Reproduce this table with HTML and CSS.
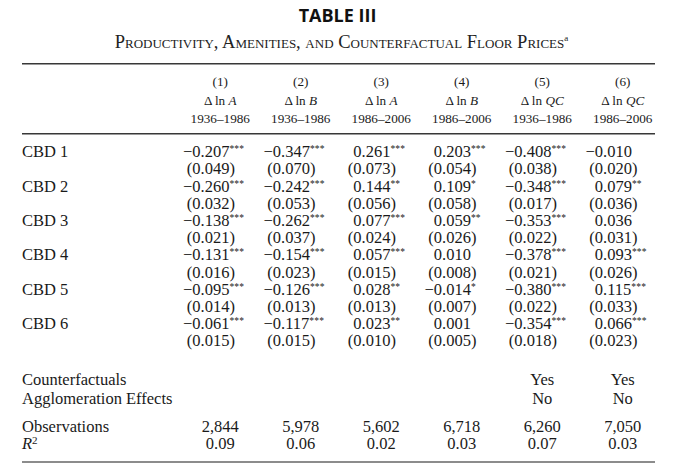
FILE: index.html
```html
<!DOCTYPE html>
<html lang="en">
<head>
<meta charset="utf-8">
<title>Table III</title>
<link rel="stylesheet" href="styles.css">
</head>
<body>
<div class="page">
  <h1 class="title">TABLE III</h1>
  <h2 class="subtitle">Productivity, Amenities, and Counterfactual Floor Prices<sup class="fn">a</sup></h2>
  <div class="table">
    <div class="rule"></div>
    <div class="grid head">
      <div></div>
      <div class="hc"><span>(1)</span><span>Δ ln <i>A</i></span><span>1936–1986</span></div>
      <div class="hc"><span>(2)</span><span>Δ ln <i>B</i></span><span>1936–1986</span></div>
      <div class="hc"><span>(3)</span><span>Δ ln <i>A</i></span><span>1986–2006</span></div>
      <div class="hc"><span>(4)</span><span>Δ ln <i>B</i></span><span>1986–2006</span></div>
      <div class="hc"><span>(5)</span><span>Δ ln <i>QC</i></span><span>1936–1986</span></div>
      <div class="hc"><span>(6)</span><span>Δ ln <i>QC</i></span><span>1986–2006</span></div>
    </div>
    <div class="rule"></div>
    <div class="grid data">
      <div class="lab">CBD 1</div>
      <div class="num"><span class="pre">−</span>0.207<sup class="st">***</sup></div>
      <div class="num"><span class="pre">−</span>0.347<sup class="st">***</sup></div>
      <div class="num"><span class="pre"></span>0.261<sup class="st">***</sup></div>
      <div class="num"><span class="pre"></span>0.203<sup class="st">***</sup></div>
      <div class="num"><span class="pre">−</span>0.408<sup class="st">***</sup></div>
      <div class="num"><span class="pre">−</span>0.010</div>

      <div class="lab"></div>
      <div class="num"><span class="pre">(</span>0.049)</div>
      <div class="num"><span class="pre">(</span>0.070)</div>
      <div class="num"><span class="pre">(</span>0.073)</div>
      <div class="num"><span class="pre">(</span>0.054)</div>
      <div class="num"><span class="pre">(</span>0.038)</div>
      <div class="num"><span class="pre">(</span>0.020)</div>

      <div class="lab">CBD 2</div>
      <div class="num"><span class="pre">−</span>0.260<sup class="st">***</sup></div>
      <div class="num"><span class="pre">−</span>0.242<sup class="st">***</sup></div>
      <div class="num"><span class="pre"></span>0.144<sup class="st">**</sup></div>
      <div class="num"><span class="pre"></span>0.109<sup class="st">*</sup></div>
      <div class="num"><span class="pre">−</span>0.348<sup class="st">***</sup></div>
      <div class="num"><span class="pre"></span>0.079<sup class="st">**</sup></div>

      <div class="lab"></div>
      <div class="num"><span class="pre">(</span>0.032)</div>
      <div class="num"><span class="pre">(</span>0.053)</div>
      <div class="num"><span class="pre">(</span>0.056)</div>
      <div class="num"><span class="pre">(</span>0.058)</div>
      <div class="num"><span class="pre">(</span>0.017)</div>
      <div class="num"><span class="pre">(</span>0.036)</div>

      <div class="lab">CBD 3</div>
      <div class="num"><span class="pre">−</span>0.138<sup class="st">***</sup></div>
      <div class="num"><span class="pre">−</span>0.262<sup class="st">***</sup></div>
      <div class="num"><span class="pre"></span>0.077<sup class="st">***</sup></div>
      <div class="num"><span class="pre"></span>0.059<sup class="st">**</sup></div>
      <div class="num"><span class="pre">−</span>0.353<sup class="st">***</sup></div>
      <div class="num"><span class="pre"></span>0.036</div>

      <div class="lab"></div>
      <div class="num"><span class="pre">(</span>0.021)</div>
      <div class="num"><span class="pre">(</span>0.037)</div>
      <div class="num"><span class="pre">(</span>0.024)</div>
      <div class="num"><span class="pre">(</span>0.026)</div>
      <div class="num"><span class="pre">(</span>0.022)</div>
      <div class="num"><span class="pre">(</span>0.031)</div>

      <div class="lab">CBD 4</div>
      <div class="num"><span class="pre">−</span>0.131<sup class="st">***</sup></div>
      <div class="num"><span class="pre">−</span>0.154<sup class="st">***</sup></div>
      <div class="num"><span class="pre"></span>0.057<sup class="st">***</sup></div>
      <div class="num"><span class="pre"></span>0.010</div>
      <div class="num"><span class="pre">−</span>0.378<sup class="st">***</sup></div>
      <div class="num"><span class="pre"></span>0.093<sup class="st">***</sup></div>

      <div class="lab"></div>
      <div class="num"><span class="pre">(</span>0.016)</div>
      <div class="num"><span class="pre">(</span>0.023)</div>
      <div class="num"><span class="pre">(</span>0.015)</div>
      <div class="num"><span class="pre">(</span>0.008)</div>
      <div class="num"><span class="pre">(</span>0.021)</div>
      <div class="num"><span class="pre">(</span>0.026)</div>

      <div class="lab">CBD 5</div>
      <div class="num"><span class="pre">−</span>0.095<sup class="st">***</sup></div>
      <div class="num"><span class="pre">−</span>0.126<sup class="st">***</sup></div>
      <div class="num"><span class="pre"></span>0.028<sup class="st">**</sup></div>
      <div class="num"><span class="pre">−</span>0.014<sup class="st">*</sup></div>
      <div class="num"><span class="pre">−</span>0.380<sup class="st">***</sup></div>
      <div class="num"><span class="pre"></span>0.115<sup class="st">***</sup></div>

      <div class="lab"></div>
      <div class="num"><span class="pre">(</span>0.014)</div>
      <div class="num"><span class="pre">(</span>0.013)</div>
      <div class="num"><span class="pre">(</span>0.013)</div>
      <div class="num"><span class="pre">(</span>0.007)</div>
      <div class="num"><span class="pre">(</span>0.022)</div>
      <div class="num"><span class="pre">(</span>0.033)</div>

      <div class="lab">CBD 6</div>
      <div class="num"><span class="pre">−</span>0.061<sup class="st">***</sup></div>
      <div class="num"><span class="pre">−</span>0.117<sup class="st">***</sup></div>
      <div class="num"><span class="pre"></span>0.023<sup class="st">**</sup></div>
      <div class="num"><span class="pre"></span>0.001</div>
      <div class="num"><span class="pre">−</span>0.354<sup class="st">***</sup></div>
      <div class="num"><span class="pre"></span>0.066<sup class="st">***</sup></div>

      <div class="lab"></div>
      <div class="num"><span class="pre">(</span>0.015)</div>
      <div class="num"><span class="pre">(</span>0.015)</div>
      <div class="num"><span class="pre">(</span>0.010)</div>
      <div class="num"><span class="pre">(</span>0.005)</div>
      <div class="num"><span class="pre">(</span>0.018)</div>
      <div class="num"><span class="pre">(</span>0.023)</div>
    </div>

    <div class="grid foot">
      <div class="lab">Counterfactuals</div>
      <div></div><div></div><div></div><div></div>
      <div class="c">Yes</div>
      <div class="c">Yes</div>
      <div class="lab">Agglomeration Effects</div>
      <div></div><div></div><div></div><div></div>
      <div class="c">No</div>
      <div class="c">No</div>
    </div>

    <div class="grid stats">
      <div class="lab">Observations</div>
      <div class="c">2,844</div>
      <div class="c">5,978</div>
      <div class="c">5,602</div>
      <div class="c">6,718</div>
      <div class="c">6,260</div>
      <div class="c">7,050</div>
      <div class="lab"><i>R</i><sup class="sq">2</sup></div>
      <div class="c">0.09</div>
      <div class="c">0.06</div>
      <div class="c">0.02</div>
      <div class="c">0.03</div>
      <div class="c">0.07</div>
      <div class="c">0.03</div>
    </div>
    <div class="rule bottom"></div>
  </div>
</div>
</body>
</html>
```

FILE: styles.css
```css
* { box-sizing: border-box; }

body {
  margin: 0;
  background: #ffffff;
  color: #1a1a1a;
  font-family: "Liberation Serif", "Times New Roman", serif;
}

.page {
  width: 683px;
  padding-top: 4px;
}

.title {
  margin: 0;
  padding-right: 8px;
  text-align: center;
  font-family: "Open Sans", "Liberation Sans", sans-serif;
  font-weight: 700;
  font-size: 18px;
  line-height: 22px;
  color: #111;
}

.subtitle {
  margin: 6px 0 0;
  text-align: center;
  font-weight: normal;
  font-size: 18.5px;
  line-height: 20px;
  font-variant: small-caps;
  color: #222;
}

.fn {
  font-size: 9px;
  line-height: 0;
  vertical-align: 7px;
  font-variant: normal;
}

.table {
  margin: 11px 0 0 22px;
  width: 633px;
}

.rule {
  height: 2px;
  background: linear-gradient(#383838 50%, #9a9a9a 50%);
}

.rule.bottom {
  background: #8c8c8c;
}

.grid {
  display: grid;
  grid-template-columns: 158px repeat(6, 80.5px);
}

.head {
  padding: 8px 0 4px;
  font-size: 13.2px;
  line-height: 18.5px;
}

.hc {
  text-align: center;
  white-space: nowrap;
}

.hc span {
  display: block;
}

.data {
  padding-top: 8.7px;
  font-size: 16.5px;
  line-height: 17.2px;
}

.num {
  padding-left: 3px;
  white-space: nowrap;
}

.pre {
  display: inline-block;
  width: 9.3px;
  text-align: right;
}

.st {
  font-size: 9.5px;
  line-height: 0;
  vertical-align: 5px;
  letter-spacing: 0.2px;
}

.foot {
  padding-top: 21.6px;
  font-size: 16.5px;
  line-height: 18.5px;
}

.stats {
  padding: 9.5px 0 8.5px;
  font-size: 16.5px;
  line-height: 17.6px;
}

.lab {
  white-space: nowrap;
}

.c {
  text-align: center;
}

.sq {
  font-size: 11px;
  line-height: 0;
  vertical-align: 5px;
}
```
